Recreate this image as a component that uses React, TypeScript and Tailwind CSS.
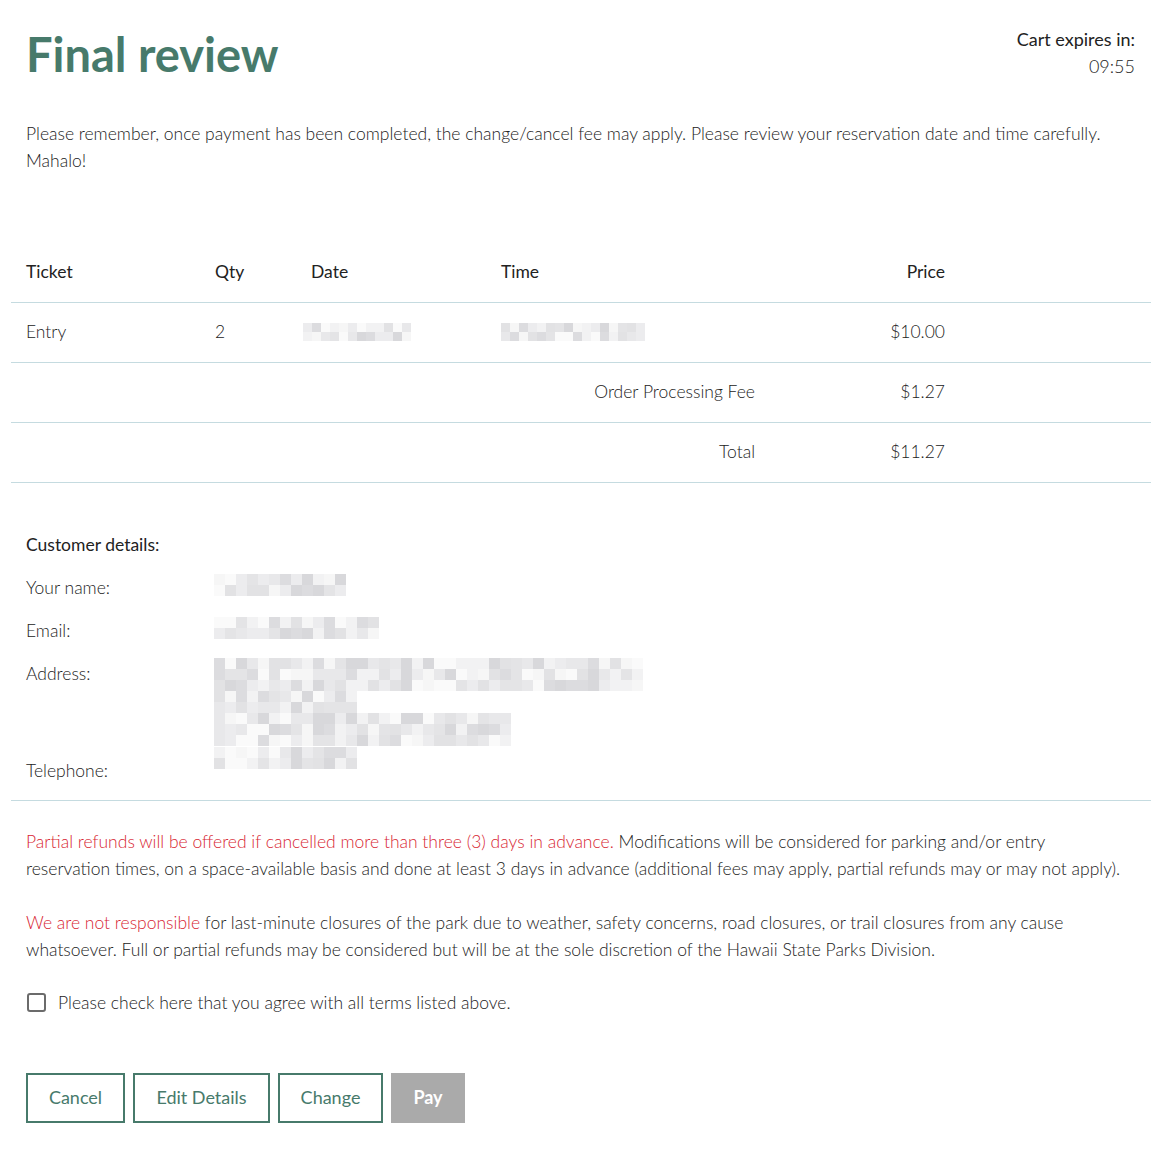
import React from "react";

// Pixelated placeholder for masked personal data
function Masked({ rows, cols, cell = 9, seed = 1 }: { rows: number; cols: number; cell?: number; seed?: number }) {
  const shades = ["#e4e4e6", "#dcdcdf", "#ececee", "#f2f2f3", "#e2e2e4", "#f6f6f6", "#e8e8ea", "#d8d8db", "#fafafa"];
  let s = seed;
  const next = () => {
    s = (s * 9301 + 49297) % 233280;
    return s / 233280;
  };
  return (
    <div className="flex flex-col">
      {Array.from({ length: rows }).map((_, r) => (
        <div key={r} className="flex">
          {Array.from({ length: cols }).map((__, c) => (
            <div
              key={c}
              style={{ width: cell, height: cell, background: shades[Math.floor(next() * shades.length)] }}
            />
          ))}
        </div>
      ))}
    </div>
  );
}

export default function App() {
  return (
    <div
      className="min-h-[1151px] w-[1158px] bg-white text-[#222222] font-light"
      style={{ fontFamily: "Lato, 'Open Sans', sans-serif" }}
    >
      <div className="pl-[11px] pr-[7px]">
        {/* Header */}
        <div className="flex items-start justify-between pl-[15px] pr-[16px] pt-[28px]">
          <h1 className="text-[47px] font-bold leading-[52px] text-[#477a6b]">Final review</h1>
          <div className="text-right text-[18px] leading-[27px] mt-[-2px]">
            <div className="font-normal">Cart expires in:</div>
            <div className="font-light">09:55</div>
          </div>
        </div>

        <p className="pl-[15px] pr-[19px] mt-[40px] text-[17.5px] leading-[27px]">
          Please remember, once payment has been completed, the change/cancel fee may apply. Please review your reservation date and time carefully. Mahalo!
        </p>

        {/* Order table */}
        <table className="mt-[68px] w-full border-collapse text-[17.5px]">
          <thead>
            <tr className="h-[60px] border-b border-[#c5dbe0]">
              <th className="w-[189px] pl-[15px] text-left font-normal">Ticket</th>
              <th className="w-[96px] pl-[15px] text-left font-normal">Qty</th>
              <th className="w-[190px] pl-[15px] text-left font-normal">Date</th>
              <th className="w-[284px] pl-[15px] text-left font-normal">Time</th>
              <th className="w-[190px] pr-[15px] text-right font-normal">Price</th>
              <th />
            </tr>
          </thead>
          <tbody>
            <tr className="h-[60px] border-b border-[#c5dbe0]">
              <td className="pl-[15px]">Entry</td>
              <td className="pl-[15px]">2</td>
              <td className="pl-[7px]">
                <div className="blur-[0.5px]">
                  <Masked rows={2} cols={12} cell={9} seed={3} />
                </div>
              </td>
              <td className="pl-[15px]">
                <div className="blur-[0.5px]">
                  <Masked rows={2} cols={16} cell={9} seed={7} />
                </div>
              </td>
              <td className="pr-[15px] text-right">$10.00</td>
              <td />
            </tr>
            <tr className="h-[60px] border-b border-[#c5dbe0]">
              <td colSpan={4} className="pr-[15px] text-right">Order Processing Fee</td>
              <td className="pr-[15px] text-right">$1.27</td>
              <td />
            </tr>
            <tr className="h-[60px] border-b border-[#c5dbe0]">
              <td colSpan={4} className="pr-[15px] text-right">Total</td>
              <td className="pr-[15px] text-right">$11.27</td>
              <td />
            </tr>
          </tbody>
        </table>

        {/* Customer details */}
        <div className="border-b border-[#c5dbe0] px-[15px] pt-[50px] pb-[17px] text-[17.5px]">
          <div className="font-normal leading-[24px]">Customer details:</div>
          <div className="mt-[19px] flex flex-col gap-[19px] leading-[24px]">
            <div className="flex h-[24px]">
              <div className="w-[188px] shrink-0">Your name:</div>
              <div className="mt-[-2px] blur-[0.5px]">
                <Masked rows={2} cols={12} cell={11} seed={11} />
              </div>
            </div>
            <div className="flex h-[24px]">
              <div className="w-[188px] shrink-0">Email:</div>
              <div className="mt-[-2px] blur-[0.5px]">
                <Masked rows={2} cols={15} cell={11} seed={17} />
              </div>
            </div>
            <div className="flex h-[78px]">
              <div className="w-[188px] shrink-0">Address:</div>
              <div className="mt-[-4px] flex flex-col blur-[0.5px]">
                <Masked rows={3} cols={39} cell={11} seed={23} />
                <Masked rows={2} cols={13} cell={11} seed={31} />
                <Masked rows={3} cols={27} cell={11} seed={37} />
              </div>
            </div>
            <div className="flex h-[24px]">
              <div className="w-[188px] shrink-0">Telephone:</div>
              <div className="mt-[-12px] blur-[0.5px]">
                <Masked rows={2} cols={13} cell={11} seed={29} />
              </div>
            </div>
          </div>
        </div>

        {/* Terms */}
        <div className="pl-[15px] pr-[19px] pt-[27px] text-[17.5px] leading-[27px]">
          <p>
            <span className="text-[#d81f33]">Partial refunds will be offered if cancelled more than three (3) days in advance.</span>{" "}
            Modifications will be considered for parking and/or entry reservation times, on a space-available basis and done at least 3 days in advance (additional fees may apply, partial refunds may or may not apply).
          </p>
          <p className="mt-[27px]">
            <span className="text-[#d81f33]">We are not responsible</span> for last-minute closures of the park due to weather, safety concerns, road closures, or trail closures from any cause whatsoever. Full or partial refunds may be considered but will be at the sole discretion of the Hawaii State Parks Division.
          </p>

          <label className="mt-[26px] flex items-center gap-[12px]">
            <span className="ml-[1px] block h-[19px] w-[19px] rounded-[3px] border-2 border-[#6b6b6b] bg-white" />
            <span>Please check here that you agree with all terms listed above.</span>
          </label>

          {/* Actions */}
          <div className="mt-[57px] flex gap-[8px] font-normal text-[18px]">
            <button className="h-[50px] w-[99px] border-2 border-[#477a6b] text-[#477a6b]">Cancel</button>
            <button className="h-[50px] w-[137px] border-2 border-[#477a6b] text-[#477a6b]">Edit Details</button>
            <button className="h-[50px] w-[105px] border-2 border-[#477a6b] text-[#477a6b]">Change</button>
            <button className="h-[50px] w-[74px] bg-[#aaaaaa] font-bold text-white">Pay</button>
          </div>
        </div>
      </div>
    </div>
  );
}
